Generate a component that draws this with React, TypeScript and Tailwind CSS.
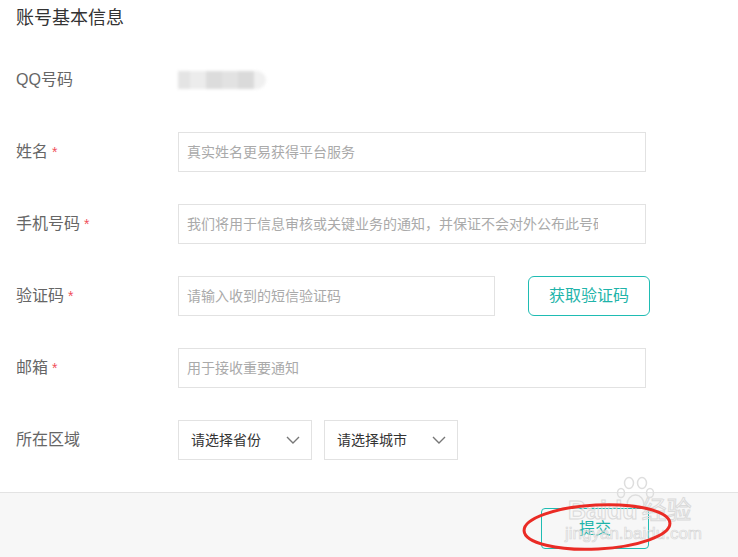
import React from 'react';

const font = { fontFamily: '"Liberation Sans", "Noto Sans CJK SC", sans-serif' };

function Label({ text, required }: { text: string; required?: boolean }) {
  return (
    <div className="w-[162px] shrink-0 text-[16px] text-[#666]">
      {text}
      {required && <span className="ml-1 text-[14px] text-[#f0505a]">*</span>}
    </div>
  );
}

function Field({ placeholder, width = 'w-[468px]' }: { placeholder: string; width?: string }) {
  return (
    <div className={`${width} h-10 border border-[#e2e2e2] flex items-center pl-[8px] text-[14px] text-[#aaa]`}>
      <span className="block max-w-[411px] overflow-hidden whitespace-nowrap">{placeholder}</span>
    </div>
  );
}

function Select({ text }: { text: string }) {
  return (
    <div className="w-[134px] h-10 border border-[#e2e2e2] flex items-center justify-between pl-[12px] pr-[11px] text-[14px] text-[#333]">
      <span>{text}</span>
      <svg width="14" height="8" viewBox="0 0 14 8" fill="none">
        <path d="M1 1l6 6 6-6" stroke="#777" strokeWidth="1.4" />
      </svg>
    </div>
  );
}

export default function App() {
  return (
    <div className="relative w-[738px] h-[557px] overflow-hidden bg-white" style={font}>
      <div className="px-4">
        <h2 className="pt-[6px] text-[18px] leading-6 text-[#333]">账号基本信息</h2>

        <div className="mt-[30px] flex flex-col gap-8">
          <div className="flex items-center h-10">
            <Label text="QQ号码" />
            <div className="flex items-center h-[18px] blur-[1.5px]">
              <div className="w-3 h-full bg-[#e4e4e4]" />
              <div className="w-4 h-full bg-[#ececec]" />
              <div className="w-4 h-full bg-[#dcdcdc]" />
              <div className="w-4 h-full bg-[#e2e2e2]" />
              <div className="w-4 h-full bg-[#dadada]" />
              <div className="w-3 h-full bg-[#f0f0f0] rounded-r-full" />
            </div>
          </div>

          <div className="flex items-center h-10">
            <Label text="姓名" required />
            <Field placeholder="真实姓名更易获得平台服务" />
          </div>

          <div className="flex items-center h-10">
            <Label text="手机号码" required />
            <Field placeholder="我们将用于信息审核或关键业务的通知，并保证不会对外公布此号码" />
          </div>

          <div className="flex items-center h-10">
            <Label text="验证码" required />
            <Field placeholder="请输入收到的短信验证码" width="w-[317px]" />
            <button className="ml-[33px] w-[122px] h-10 rounded-md border border-[#1fbcb3] text-[16px] text-[#1fb4aa]">
              获取验证码
            </button>
          </div>

          <div className="flex items-center h-10">
            <Label text="邮箱" required />
            <Field placeholder="用于接收重要通知" />
          </div>

          <div className="flex items-center h-10">
            <Label text="所在区域" />
            <div className="flex gap-3">
              <Select text="请选择省份" />
              <Select text="请选择城市" />
            </div>
          </div>
        </div>
      </div>

      <div className="mt-8 border-t border-[#e3e3e3] bg-[#f7f7f7] h-[80px] flex justify-end pr-[89px] pt-[15px]">
        <button className="w-[108px] h-[41px] rounded-[4px] border border-[#1fbcb3] text-[16px] text-[#1fb4aa]">
          提交
        </button>
      </div>

      {/* watermark */}
      <div className="absolute left-[568px] top-[476px] pointer-events-none select-none">
        <svg className="absolute left-[44px] top-0" width="48" height="30" viewBox="0 0 48 30" fill="none" stroke="#dedede" strokeWidth="1.5">
          <ellipse cx="17" cy="7" rx="4.5" ry="5.5" />
          <ellipse cx="30" cy="7" rx="4.5" ry="5.5" />
          <ellipse cx="9" cy="17" rx="3.5" ry="4.5" />
          <ellipse cx="38" cy="17" rx="3.5" ry="4.5" />
          <path d="M15 29c0-6 4-10 8.5-10s8.5 4 8.5 10" />
        </svg>
        <div className="pt-[20px] text-[25px] leading-7 font-bold text-white/0" style={{ WebkitTextStroke: '1px #dadada' }}>
          Baidu<span className="ml-1 font-normal">经验</span>
        </div>
        <div className="-ml-[3px] text-[17px] leading-5 text-white/0" style={{ WebkitTextStroke: '0.7px #d8d8d8' }}>
          jingyan.baidu.com
        </div>
      </div>

      {/* red annotation circle */}
      <svg className="absolute left-[518px] top-[498px] pointer-events-none" width="160" height="58" viewBox="0 0 160 58" fill="none">
        <ellipse cx="79" cy="29" rx="73" ry="22" transform="rotate(-3 79 29)" stroke="#ea2b25" strokeWidth="3" />
      </svg>
    </div>
  );
}
